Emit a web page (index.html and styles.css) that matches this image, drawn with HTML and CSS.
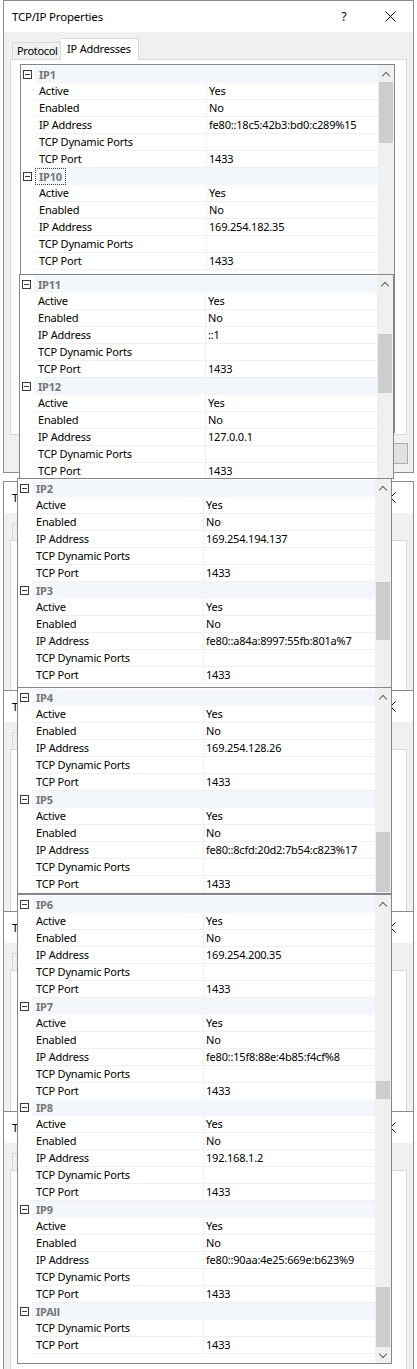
FILE: index.html
```html
<!DOCTYPE html>
<html>
<head>
<meta charset="utf-8">
<title>TCP/IP Properties</title>
<link rel="stylesheet" href="styles.css">
</head>
<body>
<div class="desk">

  <div class="dlg d1">
    <div class="tb"><span class="ttl">TCP/IP Properties</span><span class="help">?</span><span class="close"><svg width="11" height="11" viewBox="0 0 11 11"><path d="M0.5 0.5 L10.5 10.5 M10.5 0.5 L0.5 10.5" stroke="#000" stroke-width="1" fill="none"/></svg></span></div>
    <div class="tabs"><span class="tab">Protocol</span><span class="tab sel">IP Addresses</span></div>
    <div class="panel"></div>
    <div class="btnrow"><span class="btn"></span></div>
  </div>

  <div class="grid g1">
    <div class="rows">
      <div class="cat"><span class="m"><i class="box"></i></span><span class="cl">IP1</span></div>
      <div class="row"><span class="m"></span><span class="n">Active</span><span class="v">Yes</span></div>
      <div class="row"><span class="m"></span><span class="n">Enabled</span><span class="v">No</span></div>
      <div class="row"><span class="m"></span><span class="n">IP Address</span><span class="v">fe80::18c5:42b3:bd0:c289%15</span></div>
      <div class="row"><span class="m"></span><span class="n">TCP Dynamic Ports</span><span class="v"></span></div>
      <div class="row"><span class="m"></span><span class="n">TCP Port</span><span class="v">1433</span></div>
      <div class="cat"><span class="m"><i class="box"></i></span><span class="cl"><span class="focus">IP10</span></span></div>
      <div class="row"><span class="m"></span><span class="n">Active</span><span class="v">Yes</span></div>
      <div class="row"><span class="m"></span><span class="n">Enabled</span><span class="v">No</span></div>
      <div class="row"><span class="m"></span><span class="n">IP Address</span><span class="v">169.254.182.35</span></div>
      <div class="row"><span class="m"></span><span class="n">TCP Dynamic Ports</span><span class="v"></span></div>
      <div class="row"><span class="m"></span><span class="n">TCP Port</span><span class="v">1433</span></div>
    </div>
    <div class="sb"><span class="arr up"></span><span class="thumb t1"></span></div>
  </div>

  <div class="grid g2">
    <div class="rows">
      <div class="cat"><span class="m"><i class="box"></i></span><span class="cl">IP11</span></div>
      <div class="row"><span class="m"></span><span class="n">Active</span><span class="v">Yes</span></div>
      <div class="row"><span class="m"></span><span class="n">Enabled</span><span class="v">No</span></div>
      <div class="row"><span class="m"></span><span class="n">IP Address</span><span class="v">::1</span></div>
      <div class="row"><span class="m"></span><span class="n">TCP Dynamic Ports</span><span class="v"></span></div>
      <div class="row"><span class="m"></span><span class="n">TCP Port</span><span class="v">1433</span></div>
      <div class="cat"><span class="m"><i class="box"></i></span><span class="cl">IP12</span></div>
      <div class="row"><span class="m"></span><span class="n">Active</span><span class="v">Yes</span></div>
      <div class="row"><span class="m"></span><span class="n">Enabled</span><span class="v">No</span></div>
      <div class="row"><span class="m"></span><span class="n">IP Address</span><span class="v">127.0.0.1</span></div>
      <div class="row"><span class="m"></span><span class="n">TCP Dynamic Ports</span><span class="v"></span></div>
      <div class="row"><span class="m"></span><span class="n">TCP Port</span><span class="v">1433</span></div>
    </div>
    <div class="sb"><span class="arr up"></span><span class="gap gp2"></span><span class="thumb t2"></span></div>
  </div>

  <div class="dlg d2">
    <div class="tb"><span class="ttl">TCP/IP Properties</span><span class="help">?</span><span class="close"><svg width="11" height="11" viewBox="0 0 11 11"><path d="M0.5 0.5 L10.5 10.5 M10.5 0.5 L0.5 10.5" stroke="#000" stroke-width="1" fill="none"/></svg></span></div>
    <div class="tabs"><span class="tab"></span><span class="tab sel"></span></div>
    <div class="panel"></div>
    <div class="btnrow"><span class="btn"></span></div>
  </div>

  <div class="grid g3">
    <div class="rows">
      <div class="cat"><span class="m"><i class="box"></i></span><span class="cl">IP2</span></div>
      <div class="row"><span class="m"></span><span class="n">Active</span><span class="v">Yes</span></div>
      <div class="row"><span class="m"></span><span class="n">Enabled</span><span class="v">No</span></div>
      <div class="row"><span class="m"></span><span class="n">IP Address</span><span class="v">169.254.194.137</span></div>
      <div class="row"><span class="m"></span><span class="n">TCP Dynamic Ports</span><span class="v"></span></div>
      <div class="row"><span class="m"></span><span class="n">TCP Port</span><span class="v">1433</span></div>
      <div class="cat"><span class="m"><i class="box"></i></span><span class="cl">IP3</span></div>
      <div class="row"><span class="m"></span><span class="n">Active</span><span class="v">Yes</span></div>
      <div class="row"><span class="m"></span><span class="n">Enabled</span><span class="v">No</span></div>
      <div class="row"><span class="m"></span><span class="n">IP Address</span><span class="v">fe80::a84a:8997:55fb:801a%7</span></div>
      <div class="row"><span class="m"></span><span class="n">TCP Dynamic Ports</span><span class="v"></span></div>
      <div class="row"><span class="m"></span><span class="n">TCP Port</span><span class="v">1433</span></div>
    </div>
    <div class="sb"><span class="arr up"></span><span class="gap gp3"></span><span class="thumb t3"></span></div>
  </div>

  <div class="dlg d3">
    <div class="tb"><span class="ttl">TCP/IP Properties</span><span class="help">?</span><span class="close"><svg width="11" height="11" viewBox="0 0 11 11"><path d="M0.5 0.5 L10.5 10.5 M10.5 0.5 L0.5 10.5" stroke="#000" stroke-width="1" fill="none"/></svg></span></div>
    <div class="tabs"><span class="tab"></span><span class="tab sel"></span></div>
    <div class="panel"></div>
    <div class="btnrow"><span class="btn"></span></div>
  </div>

  <div class="grid g4">
    <div class="rows">
      <div class="cat"><span class="m"><i class="box"></i></span><span class="cl">IP4</span></div>
      <div class="row"><span class="m"></span><span class="n">Active</span><span class="v">Yes</span></div>
      <div class="row"><span class="m"></span><span class="n">Enabled</span><span class="v">No</span></div>
      <div class="row"><span class="m"></span><span class="n">IP Address</span><span class="v">169.254.128.26</span></div>
      <div class="row"><span class="m"></span><span class="n">TCP Dynamic Ports</span><span class="v"></span></div>
      <div class="row"><span class="m"></span><span class="n">TCP Port</span><span class="v">1433</span></div>
      <div class="cat"><span class="m"><i class="box"></i></span><span class="cl">IP5</span></div>
      <div class="row"><span class="m"></span><span class="n">Active</span><span class="v">Yes</span></div>
      <div class="row"><span class="m"></span><span class="n">Enabled</span><span class="v">No</span></div>
      <div class="row"><span class="m"></span><span class="n">IP Address</span><span class="v">fe80::8cfd:20d2:7b54:c823%17</span></div>
      <div class="row"><span class="m"></span><span class="n">TCP Dynamic Ports</span><span class="v"></span></div>
      <div class="row"><span class="m"></span><span class="n">TCP Port</span><span class="v">1433</span></div>
    </div>
    <div class="sb"><span class="arr up"></span><span class="gap gp4"></span><span class="thumb t4"></span></div>
  </div>

  <div class="dlg d4">
    <div class="tb"><span class="ttl">TCP/IP Properties</span><span class="help">?</span><span class="close"><svg width="11" height="11" viewBox="0 0 11 11"><path d="M0.5 0.5 L10.5 10.5 M10.5 0.5 L0.5 10.5" stroke="#000" stroke-width="1" fill="none"/></svg></span></div>
    <div class="tabs"><span class="tab"></span><span class="tab sel"></span></div>
    <div class="panel"></div>
    <div class="btnrow"><span class="btn"></span></div>
  </div>

  <div class="grid g5">
    <div class="rows">
      <div class="cat"><span class="m"><i class="box"></i></span><span class="cl">IP6</span></div>
      <div class="row"><span class="m"></span><span class="n">Active</span><span class="v">Yes</span></div>
      <div class="row"><span class="m"></span><span class="n">Enabled</span><span class="v">No</span></div>
      <div class="row"><span class="m"></span><span class="n">IP Address</span><span class="v">169.254.200.35</span></div>
      <div class="row"><span class="m"></span><span class="n">TCP Dynamic Ports</span><span class="v"></span></div>
      <div class="row"><span class="m"></span><span class="n">TCP Port</span><span class="v">1433</span></div>
      <div class="cat"><span class="m"><i class="box"></i></span><span class="cl">IP7</span></div>
      <div class="row"><span class="m"></span><span class="n">Active</span><span class="v">Yes</span></div>
      <div class="row"><span class="m"></span><span class="n">Enabled</span><span class="v">No</span></div>
      <div class="row"><span class="m"></span><span class="n">IP Address</span><span class="v">fe80::15f8:88e:4b85:f4cf%8</span></div>
      <div class="row"><span class="m"></span><span class="n">TCP Dynamic Ports</span><span class="v"></span></div>
      <div class="row"><span class="m"></span><span class="n">TCP Port</span><span class="v">1433</span></div>
    </div>
    <div class="sb"><span class="arr up"></span><span class="gap gp5"></span><span class="thumb t5"></span></div>
  </div>

  <div class="dlg d5">
    <div class="tb"><span class="ttl">TCP/IP Properties</span><span class="help">?</span><span class="close"><svg width="11" height="11" viewBox="0 0 11 11"><path d="M0.5 0.5 L10.5 10.5 M10.5 0.5 L0.5 10.5" stroke="#000" stroke-width="1" fill="none"/></svg></span></div>
    <div class="tabs"><span class="tab"></span><span class="tab sel"></span></div>
    <div class="panel"></div>
    <div class="btnrow"><span class="btn"></span></div>
  </div>

  <div class="grid g6">
    <div class="rows">
      <div class="cat"><span class="m"><i class="box"></i></span><span class="cl">IP8</span></div>
      <div class="row"><span class="m"></span><span class="n">Active</span><span class="v">Yes</span></div>
      <div class="row"><span class="m"></span><span class="n">Enabled</span><span class="v">No</span></div>
      <div class="row"><span class="m"></span><span class="n">IP Address</span><span class="v">192.168.1.2</span></div>
      <div class="row"><span class="m"></span><span class="n">TCP Dynamic Ports</span><span class="v"></span></div>
      <div class="row"><span class="m"></span><span class="n">TCP Port</span><span class="v">1433</span></div>
      <div class="cat"><span class="m"><i class="box"></i></span><span class="cl">IP9</span></div>
      <div class="row"><span class="m"></span><span class="n">Active</span><span class="v">Yes</span></div>
      <div class="row"><span class="m"></span><span class="n">Enabled</span><span class="v">No</span></div>
      <div class="row"><span class="m"></span><span class="n">IP Address</span><span class="v">fe80::90aa:4e25:669e:b623%9</span></div>
      <div class="row"><span class="m"></span><span class="n">TCP Dynamic Ports</span><span class="v"></span></div>
      <div class="row"><span class="m"></span><span class="n">TCP Port</span><span class="v">1433</span></div>
      <div class="cat"><span class="m"><i class="box"></i></span><span class="cl">IPAll</span></div>
      <div class="row"><span class="m"></span><span class="n">TCP Dynamic Ports</span><span class="v"></span></div>
      <div class="row"><span class="m"></span><span class="n">TCP Port</span><span class="v">1433</span></div>
    </div>
    <div class="sb"><span class="gap gp6"></span><span class="thumb t6"></span><span class="arr down"></span></div>
  </div>

</div>
</body>
</html>
```
FILE: styles.css
```css
html, body {
  margin: 0;
  padding: 0;
  background: #ffffff;
}

.desk {
  position: relative;
  width: 417px;
  height: 1369px;
  overflow: hidden;
  font-family: "Noto Sans", "Open Sans", sans-serif;
  font-size: 11px;
  letter-spacing: -0.2px;
  color: #000;
}

/* ---------- dialog windows ---------- */
.dlg {
  position: absolute;
  z-index: 0;
  left: 3px;
  width: 411px;
  height: 473px;
  box-sizing: border-box;
  border: 1px solid #8c8c8c;
  background: #f0f0f0;
  display: flex;
  flex-direction: column;
}
.d1 { top: 0; }
.d2 { top: 481px; }
.d3 { top: 690px; }
.d4 { top: 911px; }
.d5 { top: 1111px; }

.tb {
  flex: none;
  height: 31px;
  background: #fff;
  display: flex;
  align-items: center;
  padding-left: 8px;
}
.ttl {
  font-size: 11.5px;
}
.help {
  margin-left: auto;
  width: 46px;
  text-align: center;
  font-size: 12px;
}
.close {
  width: 46px;
  display: flex;
  justify-content: center;
  align-items: center;
}

.tabs {
  flex: none;
  display: flex;
  align-items: flex-end;
  height: 21px;
  margin-top: 6px;
  padding-left: 8px;
  position: relative;
  z-index: 1;
}
.tab {
  box-sizing: border-box;
  height: 17px;
  width: 49px;
  border: 1px solid #d9d9d9;
  border-bottom: none;
  background: #f0f0f0;
  padding-left: 4px;
  line-height: 16px;
  letter-spacing: -0.3px;
}
.tab.sel {
  height: 22px;
  width: 78px;
  margin-bottom: -1px;
  background: #fff;
  padding-left: 6px;
  line-height: 19px;
  border-left: none;
  letter-spacing: -0.2px;
}

.panel {
  flex: none;
  height: 376px;
  margin: 0 6px;
  box-sizing: border-box;
  border: 1px solid #d9d9d9;
  background: #fff;
}

.btnrow {
  flex: none;
  display: flex;
  margin-top: 8px;
}
.btn {
  margin-left: auto;
  margin-right: 5px;
  width: 75px;
  height: 21px;
  box-sizing: border-box;
  border: 1px solid #adadad;
  background: #e1e1e1;
}

/* ---------- property grids ---------- */
.grid {
  position: absolute;
  z-index: 0;
  width: 375px;
  box-sizing: border-box;
  border: 1px solid #828790;
  background: #fff;
  display: flex;
  overflow: hidden;
}
.g1 { left: 20px; top: 64px; height: 369px; }
.g2 { left: 19px; top: 274px; height: 205px; }
.g3 { left: 17px; top: 478px; height: 211px; }
.g4 { left: 17px; top: 687px; height: 207px; }
.g5 { left: 17px; top: 894px; height: 206px; }
.g6 { left: 17px; top: 1099px; height: 265px; border-top: none; }

.rows {
  flex: 1;
  padding-top: 1px;
}
.g6 .rows { padding-top: 0; }

.cat, .row {
  display: flex;
  height: 17px;
}
.m {
  flex: none;
  width: 14px;
  position: relative;
}
.box {
  position: absolute;
  left: 2px;
  top: 4px;
  width: 7px;
  height: 7px;
  border: 1px solid #3a3a3a;
}
.box::after {
  content: "";
  position: absolute;
  left: 1px;
  top: 3px;
  width: 5px;
  height: 1px;
  background: #3a3a3a;
}
.cl {
  flex: 1;
  background: #f3f6fb;
  padding-left: 4px;
  font-weight: bold;
  color: #767676;
  line-height: 17px;
}
.focus {
  display: inline-block;
  height: 15px;
  line-height: 15px;
  margin-left: -4px;
  padding: 0 3px;
  border: 1px dotted #444;
}
.n {
  flex: none;
  box-sizing: border-box;
  width: 172px;
  height: 17px;
  padding-left: 4px;
  border-right: 1px solid #f0f0f0;
  border-bottom: 1px solid #f0f0f0;
  line-height: 16px;
  white-space: nowrap;
}
.v {
  flex: 1;
  box-sizing: border-box;
  height: 17px;
  padding-left: 2px;
  border-bottom: 1px solid #f0f0f0;
  line-height: 16px;
  white-space: nowrap;
}

/* ---------- scrollbars ---------- */
.sb {
  flex: none;
  width: 16px;
  background: #f0f0f0;
  display: flex;
  flex-direction: column;
}
.arr {
  flex: none;
  height: 17px;
  display: flex;
  align-items: center;
  justify-content: center;
}
.arr::before {
  content: "";
  width: 5px;
  height: 5px;
  border-left: 1.5px solid #606060;
  border-top: 1.5px solid #606060;
}
.arr.up::before {
  transform: rotate(45deg);
  margin-top: 4px;
}
.arr.down::before {
  transform: rotate(225deg);
  margin-top: -4px;
}
.gap { flex: none; }
.thumb {
  flex: none;
  margin: 0 1px;
  background: #cdcdcd;
}
.t1 { height: 61px; }
.gp2 { height: 42px; }
.t2 { height: 59px; }
.gp3 { height: 86px; }
.t3 { height: 58px; }
.gp4 { height: 127px; }
.t4 { height: 60px; }
.gp5 { height: 169px; }
.t5 { height: 40px; }
.gp6 { height: 188px; }
.t6 { height: 60px; }
```
